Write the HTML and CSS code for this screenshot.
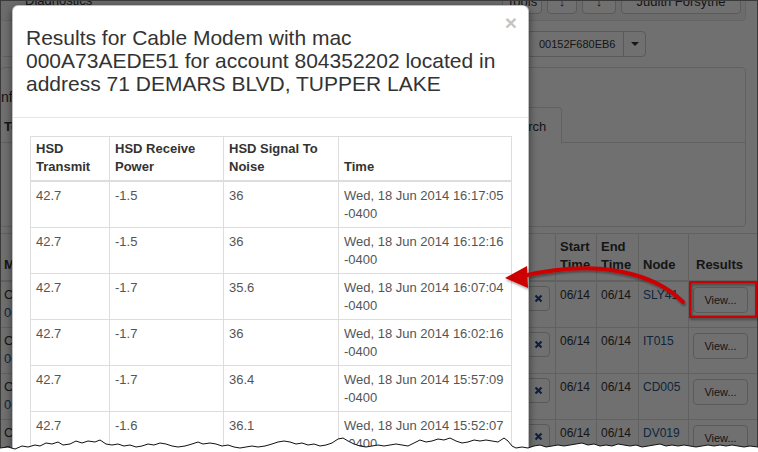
FILE: index.html
```html
<!DOCTYPE html>
<html lang="en">
<head>
<meta charset="utf-8">
<title>Cable Modem Results</title>
<link rel="stylesheet" href="styles.css">
</head>
<body>
<div class="page">
  <div class="well">
    <span class="well-title">Diagnostics</span>
    <span class="btn w40">Tools</span>
    <span class="btn w30">↓</span>
    <span class="btn w34">↓</span>
    <span class="btn w120">Judith Forsythe</span>
  </div>
  <div class="toolbar">
    <div class="field"></div>
    <div class="btn-group">
      <span class="btn btn-mac">00152F680EB6</span>
      <span class="btn btn-caret"><i class="caret"></i></span>
    </div>
  </div>
  <div class="panel">
    <div class="panel-head">nformation</div>
    <ul class="tabs">
      <li class="tab-a">Tests</li>
      <li class="tab-b"></li>
      <li class="active">History Search</li>
    </ul>
  </div>
  <table class="jobs">
    <colgroup>
      <col class="c1"><col class="c2"><col class="c3"><col class="c4"><col class="c5"><col class="c6"><col class="c7"><col class="c8"><col class="c9">
    </colgroup>
    <thead>
      <tr><th class="first">MAC</th><th></th><th></th><th></th><th></th><th>Start Time</th><th>End Time</th><th>Node</th><th>Results</th></tr>
    </thead>
    <tbody>
      <tr><td class="first">CM<br><span class="link">00</span></td><td></td><td></td><td></td><td><span class="xbtn"><svg width="9" height="9" viewBox="0 0 9 9"><path d="M1.5 1.5L7.5 7.5M7.5 1.5L1.5 7.5" stroke="#1c4f86" stroke-width="2.2"/></svg></span></td><td>06/14</td><td>06/14</td><td class="link">SLY41</td><td class="res-cell"><span class="btn vbtn">View...</span></td></tr>
      <tr><td class="first">CM<br><span class="link">00</span></td><td></td><td></td><td></td><td><span class="xbtn"><svg width="9" height="9" viewBox="0 0 9 9"><path d="M1.5 1.5L7.5 7.5M7.5 1.5L1.5 7.5" stroke="#1c4f86" stroke-width="2.2"/></svg></span></td><td>06/14</td><td>06/14</td><td class="link">IT015</td><td class="res-cell"><span class="btn vbtn">View...</span></td></tr>
      <tr><td class="first">CM<br><span class="link">00</span></td><td></td><td></td><td></td><td><span class="xbtn"><svg width="9" height="9" viewBox="0 0 9 9"><path d="M1.5 1.5L7.5 7.5M7.5 1.5L1.5 7.5" stroke="#1c4f86" stroke-width="2.2"/></svg></span></td><td>06/14</td><td>06/14</td><td class="link">CD005</td><td class="res-cell"><span class="btn vbtn">View...</span></td></tr>
      <tr><td class="first">CM<br><span class="link">00</span></td><td></td><td></td><td></td><td><span class="xbtn"><svg width="9" height="9" viewBox="0 0 9 9"><path d="M1.5 1.5L7.5 7.5M7.5 1.5L1.5 7.5" stroke="#1c4f86" stroke-width="2.2"/></svg></span></td><td>06/14</td><td>06/14</td><td class="link">DV019</td><td class="res-cell"><span class="btn vbtn">View...</span></td></tr>
    </tbody>
  </table>
</div>

<div class="backdrop"></div>

<div class="modal">
  <div class="modal-header">
    <span class="close">×</span>
    <h4 class="modal-title">Results for Cable Modem with mac 000A73AEDE51 for account 804352202 located in address 71 DEMARS BLVD, TUPPER LAKE</h4>
  </div>
  <div class="modal-body">
    <table class="res">
      <colgroup><col class="r1"><col class="r2"><col class="r3"><col class="r4"></colgroup>
      <thead>
        <tr><th>HSD Transmit</th><th>HSD Receive Power</th><th>HSD Signal To Noise</th><th>Time</th></tr>
      </thead>
      <tbody>
        <tr><td>42.7</td><td>-1.5</td><td>36</td><td>Wed, 18 Jun 2014 16:17:05 -0400</td></tr>
        <tr><td>42.7</td><td>-1.5</td><td>36</td><td>Wed, 18 Jun 2014 16:12:16 -0400</td></tr>
        <tr><td>42.7</td><td>-1.7</td><td>35.6</td><td>Wed, 18 Jun 2014 16:07:04 -0400</td></tr>
        <tr><td>42.7</td><td>-1.7</td><td>36</td><td>Wed, 18 Jun 2014 16:02:16 -0400</td></tr>
        <tr><td>42.7</td><td>-1.7</td><td>36.4</td><td>Wed, 18 Jun 2014 15:57:09 -0400</td></tr>
        <tr><td>42.7</td><td>-1.6</td><td>36.1</td><td>Wed, 18 Jun 2014 15:52:07 -0400</td></tr>
      </tbody>
    </table>
  </div>
</div>

<div class="frame"></div>

<svg class="annot" width="758" height="452" viewBox="0 0 758 452">
  <g filter="url(#sh)">
    <path d="M683 302 C655 274 600 258 523 276" fill="none" stroke="#cc0000" stroke-width="4" stroke-linecap="round"/>
    <polygon points="505,278 527,266 528,288" fill="#cc0000"/>
    <rect x="690.25" y="282.25" width="66" height="34.5" fill="none" stroke="#cc0000" stroke-width="2.5"/>
  </g>
  <defs>
    <filter id="sh" x="-10%" y="-10%" width="120%" height="130%">
      <feDropShadow dx="1" dy="2" stdDeviation="1.2" flood-color="#000" flood-opacity="0.35"/>
    </filter>
  </defs>
</svg>

<svg class="torn" width="758" height="452" viewBox="0 0 758 452">
  <polygon fill="#ffffff" points="0,448 8,447 15,449 22,446 28,447 35,445 40,446 46,443 52,444 58,442 63,445 70,444 76,441 82,443 88,441 95,442 100,440 106,444 112,445 118,444 124,446 130,445 136,447 142,446 148,444 154,445 160,443 166,444 172,446 178,447 185,446 192,444 198,442 203,444 210,443 216,444 222,446 228,445 234,447 240,448 246,447 252,446 258,447 265,446 272,444 278,442 284,441 290,442 296,444 302,443 308,445 314,444 320,446 326,445 332,443 338,439 343,438 348,441 354,444 360,446 366,447 372,446 378,445 384,446 390,445 396,444 402,445 408,446 414,443 420,440 426,442 432,441 438,439 444,440 450,438 456,441 462,443 468,442 474,440 480,441 486,440 492,441 498,442 504,438 508,441 512,446 516,448 522,447 528,448 534,446 540,445 546,447 552,446 558,445 564,446 570,445 576,444 582,443 588,445 594,444 600,446 606,445 612,446 618,444 624,445 630,446 636,445 642,447 648,446 654,445 660,444 666,446 672,445 678,446 684,445 690,446 696,447 702,446 708,445 714,446 720,445 726,446 732,445 738,446 744,447 750,446 758,447 758,452 0,452"/>
  <polyline fill="none" stroke="#111" stroke-width="1" points="0,448 8,447 15,449 22,446 28,447 35,445 40,446 46,443 52,444 58,442 63,445 70,444 76,441 82,443 88,441 95,442 100,440 106,444 112,445 118,444 124,446 130,445 136,447 142,446 148,444 154,445 160,443 166,444 172,446 178,447 185,446 192,444 198,442 203,444 210,443 216,444 222,446 228,445 234,447 240,448 246,447 252,446 258,447 265,446 272,444 278,442 284,441 290,442 296,444 302,443 308,445 314,444 320,446 326,445 332,443 338,439 343,438 348,441 354,444 360,446 366,447 372,446 378,445 384,446 390,445 396,444 402,445 408,446 414,443 420,440 426,442 432,441 438,439 444,440 450,438 456,441 462,443 468,442 474,440 480,441 486,440 492,441 498,442 504,438 508,441 512,446 516,448 522,447 528,448 534,446 540,445 546,447 552,446 558,445 564,446 570,445 576,444 582,443 588,445 594,444 600,446 606,445 612,446 618,444 624,445 630,446 636,445 642,447 648,446 654,445 660,444 666,446 672,445 678,446 684,445 690,446 696,447 702,446 708,445 714,446 720,445 726,446 732,445 738,446 744,447 750,446 758,447"/>
</svg>
</body>
</html>
```

FILE: styles.css
```css
* { box-sizing: border-box; }
html, body { margin: 0; padding: 0; }
body {
  width: 758px;
  height: 452px;
  overflow: hidden;
  position: relative;
  background: #fff;
  color: #333;
  font-family: "Liberation Sans", Arial, sans-serif;
  font-size: 13px;
}

/* ---------- background page ---------- */
.well {
  display: flex;
  align-items: center;
  justify-content: flex-end;
  gap: 5px;
  margin: -19px 12px 0 0;
  padding: 6px 4px;
  border: 1px solid #e3e3e3;
  border-radius: 4px;
  background: #f5f5f5;
}
.well-title { margin-right: auto; padding-left: 20px; font-size: 13px; line-height: 20px; color: #333; }
.btn {
  display: inline-flex;
  align-items: center;
  justify-content: center;
  height: 26px;
  padding: 0 10px;
  border: 1px solid #ccc;
  border-radius: 4px;
  background: #fff;
  color: #333;
  font-size: 11px;
  white-space: nowrap;
}
.well .btn { font-size: 13px; }
.w40 { width: 40px; }
.w30 { width: 30px; }
.w34 { width: 34px; }
.w120 { width: 120px; }

.toolbar {
  display: flex;
  align-items: center;
  gap: 8px;
  margin-top: 10px;
  padding-left: 3px;
  height: 26px;
}
.field { width: 516px; height: 26px; border-bottom: 1px solid #ddd; }
.btn-group { display: flex; }
.btn-mac { width: 97px; padding: 0 11px; justify-content: flex-start; border-radius: 4px 0 0 4px; }
.btn-caret { width: 23px; padding: 0; margin-left: -1px; border-radius: 0 4px 4px 0; }
.caret { width: 0; height: 0; border-left: 4px solid transparent; border-right: 4px solid transparent; border-top: 4px solid #333; }

.panel {
  margin: 10px 12px 0 0;
  height: 160px;
  border: 1px solid #ddd;
  border-radius: 4px;
}
.panel-head { height: 39px; padding: 20px 0 0 0; line-height: 18px; font-size: 14px; }
.tabs {
  display: flex;
  list-style: none;
  margin: 0;
  padding: 0;
  height: 36px;
  border-bottom: 1px solid #ddd;
}
.tabs li {
  padding: 8px 15px;
  line-height: 18px;
  border: 1px solid transparent;
  border-radius: 4px 4px 0 0;
  white-space: nowrap;
  height: 36px;
}
.tabs .tab-a { width: 190px; padding-left: 2px; padding-top: 10px; font-weight: bold; }
.tabs .tab-b { width: 254px; }
.tabs li.active { border-color: #ddd; border-bottom-color: #fff; background: #fff; height: 37px; padding-top: 10px; }

.jobs {
  margin-top: 6px;
  width: 758px;
  table-layout: fixed;
  border-collapse: collapse;
  border-top: 1px solid #ddd;
}
.c1 { width: 140px; } .c2 { width: 160px; } .c3 { width: 120px; } .c4 { width: 100px; }
.c5 { width: 35px; } .c6 { width: 41px; } .c7 { width: 42px; } .c8 { width: 50px; } .c9 { width: 70px; }
.jobs th, .jobs td {
  border: 1px solid #ddd;
  text-align: left;
  line-height: 18px;
  overflow: hidden;
  white-space: normal;
}
.jobs th {
  padding: 4px 5px 6px 4px;
  vertical-align: bottom;
  font-weight: bold;
  font-size: 13px;
  border-bottom-width: 2px;
}
.jobs th:last-child { padding-left: 7px; }
.jobs td {
  padding: 4px 4px 5px;
  vertical-align: top;
  font-size: 12px;
  height: 46px;
}
.jobs .first { padding-left: 3px; font-size: 13px; white-space: nowrap; }
.link { color: #24578a; }
.xbtn {
  display: inline-flex;
  align-items: center;
  justify-content: center;
  width: 24px;
  height: 25px;
  margin-left: 1px;
  border: 1px solid #ccc;
  border-radius: 4px;
  background: #fff;
}
.res-cell { text-align: center !important; padding-left: 0 !important; padding-right: 6px !important; padding-top: 5px !important; }
.vbtn { width: 55px; height: 26px; padding: 0; }

.backdrop {
  position: absolute;
  inset: 0;
  background: rgba(0, 0, 0, 0.56);
}

/* ---------- modal ---------- */
.modal {
  position: absolute;
  left: 12px;
  top: 5px;
  width: 517px;
  background: #fff;
  border: 1px solid rgba(0, 0, 0, 0.25);
  border-radius: 6px;
  box-shadow: 0 3px 9px rgba(0, 0, 0, 0.55);
}
.modal-header {
  position: relative;
  padding: 20px 24px 22px 13px;
  border-bottom: 1px solid #e5e5e5;
}
.modal-title {
  margin: 0;
  font-size: 21px;
  font-weight: normal;
  line-height: 23px;
  color: #333;
}
.close {
  position: absolute;
  top: 6px;
  right: 11px;
  font-size: 21px;
  font-weight: bold;
  line-height: 21px;
  color: #c4c4c4;
}
.modal-body { padding: 18px 17px 40px; }
.res {
  width: 100%;
  table-layout: fixed;
  border-collapse: collapse;
  border: 1px solid #ddd;
  font-size: 13px;
}
.r1 { width: 79px; } .r2 { width: 114px; } .r3 { width: 115px; } .r4 { width: 173px; }
.res th, .res td {
  border: 1px solid #ddd;
  text-align: left;
  line-height: 18px;
  padding: 5px 5px 4px;
}
.res th {
  vertical-align: bottom;
  font-weight: bold;
  color: #333;
  padding-top: 3px;
  border-bottom-width: 2px;
}
.res td { vertical-align: top; color: #555; }

/* ---------- screenshot decorations ---------- */
.frame {
  position: absolute;
  inset: 0;
  border: 1px solid #3a3a3a;
  border-bottom: none;
  pointer-events: none;
}
.annot, .torn {
  position: absolute;
  left: 0;
  top: 0;
  pointer-events: none;
}
```
